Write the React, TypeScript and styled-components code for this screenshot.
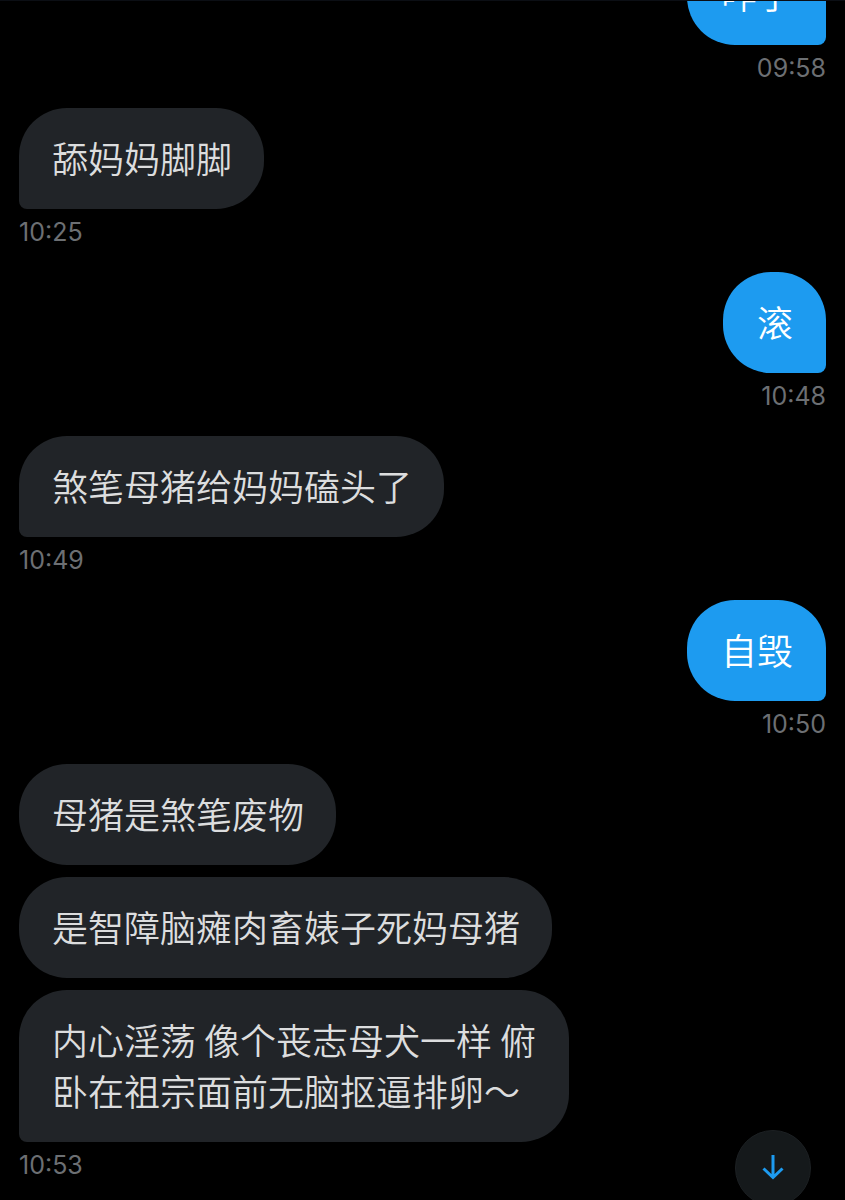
import React from "react";
import styled, { createGlobalStyle } from "styled-components";

const GlobalStyle = createGlobalStyle`
  * { box-sizing: border-box; }
  body { margin: 0; background: #000; }
`;

const Screen = styled.main`
  position: relative;
  height: 100vh;
  overflow: hidden;
  display: flex;
  flex-direction: column;
  justify-content: flex-end;
  background: #000;
  border-top: 1px solid #0b0e14;
  font-family: "Noto Sans CJK SC", sans-serif;
`;

const Thread = styled.ol`
  list-style: none;
  margin: 0;
  padding: 0 19px 12px;
  display: flex;
  flex-direction: column;
  flex-shrink: 0;
  gap: 17px;
`;

const Group = styled.li<{ $own: boolean }>`
  display: flex;
  flex-direction: column;
  align-items: ${(p) => (p.$own ? "flex-end" : "flex-start")};
`;

const Bubbles = styled.div<{ $own: boolean }>`
  display: flex;
  flex-direction: column;
  align-items: inherit;
  gap: 12px;

  > :last-child {
    ${(p) => (p.$own ? "border-bottom-right-radius" : "border-bottom-left-radius")}: 8px;
  }
`;

const Bubble = styled.p<{ $own: boolean }>`
  margin: 0;
  max-width: 550px;
  padding: ${(p) => (p.$own ? "24px 33px 26px 34px" : "24px 32px 26px 33px")};
  border-radius: 48px;
  background: ${(p) => (p.$own ? "#1d9bf0" : "#212428")};
  color: ${(p) => (p.$own ? "#fff" : "#dcddde")};
  font-size: 36px;
  font-weight: 350;
  line-height: 51px;
`;

const Time = styled.time`
  color: #6c6f73;
  font-family: Inter, sans-serif;
  font-size: 25px;
  line-height: 46px;
`;

const JumpButton = styled.button`
  position: absolute;
  right: 34px;
  bottom: -6px;
  width: 76px;
  height: 76px;
  padding: 0;
  display: flex;
  align-items: center;
  justify-content: center;
  border: 1px solid #1c2023;
  border-radius: 50%;
  background: #15191b;
  color: #1d9bf0;
`;

type MessageGroup = { own: boolean; time: string; messages: string[] };

const groups: MessageGroup[] = [
  { own: true, time: "09:58", messages: ["咋了"] },
  { own: false, time: "10:25", messages: ["舔妈妈脚脚"] },
  { own: true, time: "10:48", messages: ["滚"] },
  { own: false, time: "10:49", messages: ["煞笔母猪给妈妈磕头了"] },
  { own: true, time: "10:50", messages: ["自毁"] },
  {
    own: false,
    time: "10:53",
    messages: [
      "母猪是煞笔废物",
      "是智障脑瘫肉畜婊子死妈母猪",
      "内心淫荡 像个丧志母犬一样 俯卧在祖宗面前无脑抠逼排卵～",
    ],
  },
];

export default function App() {
  return (
    <Screen lang="zh-CN">
      <GlobalStyle />
      <Thread>
        {groups.map((g) => (
          <Group key={g.time} $own={g.own}>
            <Bubbles $own={g.own}>
              {g.messages.map((m) => (
                <Bubble key={m} $own={g.own}>
                  {m}
                </Bubble>
              ))}
            </Bubbles>
            <Time>{g.time}</Time>
          </Group>
        ))}
      </Thread>
      <JumpButton type="button" aria-label="跳到最新消息">
        <svg width="24" height="28" viewBox="0 0 24 28" fill="none" stroke="currentColor" strokeWidth="3" aria-hidden="true">
          <path d="M12 1v23M2.5 14.5l9.500 9 9.500-9" />
        </svg>
      </JumpButton>
    </Screen>
  );
}
